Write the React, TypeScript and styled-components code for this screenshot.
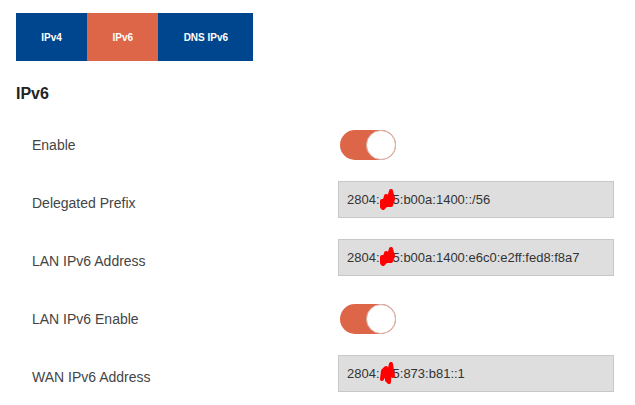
import styled, { createGlobalStyle } from "styled-components"

const GlobalStyle = createGlobalStyle`
    body {
        margin: 0;
        background: #fff;
        font-family: "Liberation Sans", Arial, sans-serif;
    }
`

const Page = styled.div`
    padding: 13px 16px 0 16px;
    box-sizing: border-box;
`

const TabBar = styled.div`
    display: flex;
`

const Tab = styled.div<{ $active?: boolean }>`
    height: 48px;
    padding: 0 25.3px;
    display: flex;
    align-items: center;
    justify-content: center;
    background: ${p => (p.$active ? "#dd6649" : "#00468e")};
    color: #fff;
    font-size: 10px;
    font-weight: bold;
`

const Heading = styled.h2`
    margin: 23px 0 12px 0;
    font-size: 16px;
    line-height: 20px;
    font-weight: bold;
    color: #222;
`

const Row = styled.div`
    display: grid;
    grid-template-columns: 306px 1fr;
    align-items: center;
    height: 58px;
    padding-left: 16px;
`

const Label = styled.div`
    font-size: 14px;
    color: #444;
`

const Toggle = styled.div`
    position: relative;
    width: 56px;
    height: 30px;
    margin-left: 2px;
    border-radius: 15px;
    background: #dd6649;
    box-sizing: border-box;
`

const Knob = styled.div`
    position: absolute;
    right: 0;
    top: 0;
    width: 30px;
    height: 30px;
    border-radius: 50%;
    background: #fff;
    border: 1px solid #d9b0a6;
    box-sizing: border-box;
`

const Field = styled.div`
    width: 276px;
    height: 37px;
    margin-bottom: 7px;
    box-sizing: border-box;
    border: 1px solid #c8c8c8;
    background: #dedede;
    padding-left: 8px;
    display: flex;
    align-items: center;
    font-size: 13px;
    color: #333;
    white-space: nowrap;
`

const Hidden = styled.span`
    position: relative;
    display: inline-block;
    width: 13px;
    height: 15px;
`

const Scribble = styled.svg`
    position: absolute;
    left: -1px;
    top: -4px;
`

const marks: Record<string, string> = {
    a: "M3 19 L3 13 L6 13 L7 8 L10 10 L12 3 L14 11 L12 17 L7 17 L4 20 M5 15 L12 15 M6 11 L12 11",
    b: "M3 17 L3 11 L6 11 L7 7 L10 9 L12 3 L14 10 L12 15 L7 15 L4 18 M5 13 L12 13 M6 10 L12 10",
    c: "M3 17 L4 9 L7 6 L8 18 L10 20 L11 6 L12 2 L13 8 L14 14 M6 12 L11 12",
}

const Redacted = ({ mark }: { mark: string }) => (
    <Hidden>
        <Scribble width="17" height="24" viewBox="0 0 17 24">
            <path d={marks[mark]} stroke="#f00" strokeWidth="4" fill="#f00" strokeLinejoin="round" strokeLinecap="round" />
        </Scribble>
    </Hidden>
)

const Switch = () => (
    <Toggle>
        <Knob />
    </Toggle>
)

export default function App() {
    return (
        <Page>
            <GlobalStyle />
            <TabBar>
                <Tab>IPv4</Tab>
                <Tab $active>IPv6</Tab>
                <Tab>DNS IPv6</Tab>
            </TabBar>

            <Heading>IPv6</Heading>

            <Row>
                <Label>Enable</Label>
                <Switch />
            </Row>
            <Row>
                <Label>Delegated Prefix</Label>
                <Field>2804:<Redacted mark="a" />5:b00a:1400::/56</Field>
            </Row>
            <Row>
                <Label>LAN IPv6 Address</Label>
                <Field>2804:<Redacted mark="b" />5:b00a:1400:e6c0:e2ff:fed8:f8a7</Field>
            </Row>
            <Row>
                <Label>LAN IPv6 Enable</Label>
                <Switch />
            </Row>
            <Row>
                <Label>WAN IPv6 Address</Label>
                <Field>2804:<Redacted mark="c" />5:873:b81::1</Field>
            </Row>
        </Page>
    )
}
